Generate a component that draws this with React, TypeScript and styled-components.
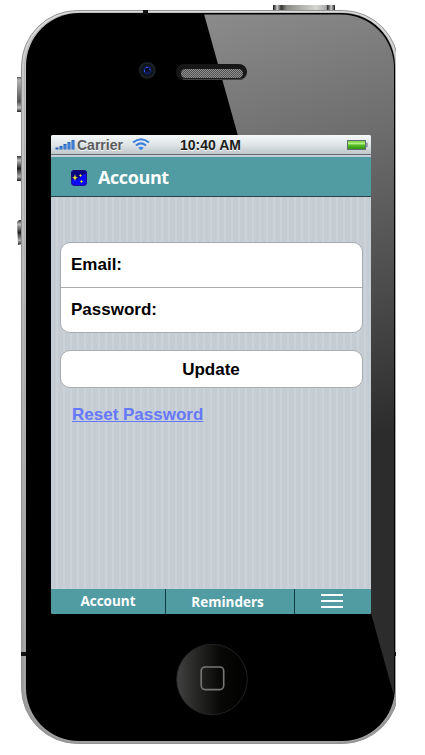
import React from "react";
import styled, { createGlobalStyle } from "styled-components";

const teal = "#519ba2";

const GlobalStyle = createGlobalStyle`
  body { margin: 0; background: #fff; overflow: hidden; }
  * { box-sizing: border-box; }
`;

const Stage = styled.main`
  position: relative;
  width: 425px;
  height: 755px;
  padding: 135px 54px 0 51px;
  overflow: hidden;
  font-family: "Liberation Sans", Arial, sans-serif;
`;

const Device = styled.svg`
  position: absolute;
  inset: 0;
  display: block;
`;

const Screen = styled.section`
  position: relative;
  width: 320px;
  height: 479px;
  display: flex;
  flex-direction: column;
  overflow: hidden;
  border-radius: 2px;
  background: repeating-linear-gradient(90deg, #c5ccd4 0 5px, #cbd2d8 5px 7px);
`;

const StatusBar = styled.div`
  height: 20px;
  flex: none;
  display: grid;
  grid-template-columns: 1fr auto 1fr;
  align-items: center;
  padding: 0 3px 0 4px;
  background: linear-gradient(#f5f8f9, #dce2e4 55%, #bfc7cb);
  border-bottom: 1px solid #66716f;
  font-size: 14px;
  font-weight: 700;
  color: #1c1c1c;
  text-shadow: 0 1px 0 #fff;
`;

const Signal = styled.div`
  display: flex;
  align-items: center;
  color: #5b5b5b;
`;

const Carrier = styled.span`
  margin: 0 9px 0 2px;
`;

const Clock = styled.span`
  margin-right: 2px;
`;

const Battery = styled.svg`
  justify-self: end;
`;

const Header = styled.header`
  height: 42px;
  flex: none;
  display: flex;
  align-items: center;
  gap: 11px;
  padding: 2px 0 0 20px;
  border-top: 2px solid #c5ccd8;
  border-bottom: 1px solid #263e47;
  background: ${teal};
`;

const Title = styled.h1`
  margin: 0 0 2px;
  color: #fff;
  font: 700 18px/24px "Open Sans", sans-serif;
  letter-spacing: -0.4px;
`;

const Content = styled.div`
  flex: 1;
  padding: 45px 8px 0 9px;
`;

const Card = styled.div`
  border: 1px solid #a9acaf;
  border-radius: 10px;
  background: #fff;
  overflow: hidden;
`;

const Field = styled.label`
  display: block;
  height: 44px;
  padding-left: 10px;
  font: 700 17px/43px "Liberation Sans", Arial, sans-serif;
  color: #000;
  & + & { height: 45px; border-top: 1px solid #a9acaf; }
`;

const UpdateButton = styled.button`
  display: block;
  width: 100%;
  height: 38px;
  margin: 17px 0 16px;
  padding: 2px 1px 0 0;
  border: 1px solid #a9acaf;
  border-radius: 10px;
  background: #fff;
  color: #000;
  font: 700 17px "Liberation Sans", Arial, sans-serif;
`;

const ResetLink = styled.a`
  margin-left: 12px;
  color: #6678fb;
  font-size: 17px;
  font-weight: 700;
  line-height: 22px;
  text-decoration: underline;
`;

const TabBar = styled.nav`
  height: 25px;
  flex: none;
  display: grid;
  grid-template-columns: 115px 129px 76px;
  background: ${teal};
`;

const Tab = styled.a<{ $divided?: boolean; $lift?: number; $shift?: number }>`
  display: flex;
  align-items: center;
  justify-content: center;
  padding: 0 ${({ $shift = 2 }) => $shift}px ${({ $lift = 0 }) => $lift}px 0;
  border-right: ${({ $divided }) => ($divided ? "1px solid #113e43" : "0")};
  color: #fff;
  font: 700 13.5px/20px "Open Sans", sans-serif;
`;

const PhoneBody = () => (
  <Device width="425" height="755" viewBox="0 0 425 755" aria-hidden="true">
    <defs>
      <linearGradient id="rim" x1="0" y1="0" x2="0" y2="1">
        <stop offset="0" stopColor="#ddd" />
        <stop offset=".1" stopColor="#c6c6c6" />
        <stop offset="1" stopColor="#999" />
      </linearGradient>
      <linearGradient id="glare" gradientUnits="userSpaceOnUse" x1="240" y1="0" x2="360" y2="440">
        <stop offset="0" stopColor="#8c8c8c" />
        <stop offset=".32" stopColor="#707070" />
        <stop offset=".83" stopColor="#3e3e3e" />
        <stop offset="1" stopColor="#2c2c2c" />
      </linearGradient>
      <linearGradient id="side" x1="0" y1="0" x2="0" y2="1">
        <stop offset="0" stopColor="#555" />
        <stop offset=".08" stopColor="#b4b4b4" />
        <stop offset=".7" stopColor="#555" />
        <stop offset=".88" stopColor="#bbb" />
        <stop offset="1" stopColor="#222" />
      </linearGradient>
      <linearGradient id="rocker" x1="0" y1="0" x2="0" y2="1">
        <stop offset="0" stopColor="#333" />
        <stop offset=".17" stopColor="#bbb" />
        <stop offset=".5" stopColor="#222" />
        <stop offset=".82" stopColor="#aaa" />
        <stop offset="1" stopColor="#222" />
      </linearGradient>
      <linearGradient id="power">
        <stop offset="0" stopColor="#111" />
        <stop offset=".07" stopColor="#ccc" />
        <stop offset=".13" stopColor="#333" />
        <stop offset=".22" stopColor="#8a8a85" />
        <stop offset=".7" stopColor="#d6d6d3" />
        <stop offset=".86" stopColor="#aaa" />
        <stop offset=".88" stopColor="#333" />
        <stop offset=".94" stopColor="#ccc" />
        <stop offset="1" stopColor="#111" />
      </linearGradient>
      <linearGradient id="home">
        <stop offset="0" stopColor="#414141" />
        <stop offset=".62" stopColor="#080806" />
        <stop offset="1" stopColor="#000" />
      </linearGradient>
      <pattern id="mesh" width="2" height="2" patternUnits="userSpaceOnUse">
        <rect width="2" height="2" fill="#505050" />
        <path d="M0 0h1v1H0zM1 1h1v1H1z" fill="#909090" />
      </pattern>
      <clipPath id="edge"><path d="M0 0h396v755H0z" /></clipPath>
      <clipPath id="glass"><rect x="26" y="14.5" width="368" height="726.5" rx="53" /></clipPath>
    </defs>
    <path d="M273 5h62v6h-62z" fill="url(#power)" />
    <path d="M17 77h5v35h-5z" fill="url(#side)" />
    <path d="M17 156h5v25h-5z" fill="url(#rocker)" />
    <path d="M17 222l2-2h3v24l-4 1z" fill="url(#rocker)" />
    <g clipPath="url(#edge)">
      <rect x="21.5" y="10.5" width="377" height="733" rx="56" fill="url(#rim)" stroke="#929292" />
      <rect x="24.5" y="12.7" width="371" height="729" rx="54" fill="none" stroke="#aaa" strokeWidth=".8" />
      <rect x="26" y="13" width="369" height="728" rx="53" fill="#000" />
    </g>
    <path d="M204 14H425V807L204 14z" fill="url(#glare)" clipPath="url(#glass)" />
    <path d="M143 10h5v4h-5zM21 652h5v4h-5zM394 652h2v4h-2z" fill="#111" />
    <circle cx="147.3" cy="70.3" r="8.4" fill="#1d2226" />
    <circle cx="147.3" cy="70.3" r="6.5" fill="#101519" />
    <circle cx="147.5" cy="70.3" r="4" fill="#12216a" />
    <circle cx="147.5" cy="70.3" r="2.2" fill="#03031e" />
    <path d="M144 70h1v2h-1zM146 67h2v1h-2zM149 69h1v1h-1z" fill="#3a55e8" />
    <rect x="176" y="64" width="71" height="16" rx="8" fill="#171717" />
    <path d="M183 79.4h57q5 0 6-4" fill="none" stroke="#4a4a4a" />
    <rect x="181" y="69" width="62" height="9" rx="4.5" fill="url(#mesh)" />
    <circle cx="212" cy="679.5" r="35.3" fill="url(#home)" stroke="#292929" strokeWidth=".8" />
    <rect x="201.2" y="667" width="22.5" height="22.6" rx="4" fill="none" stroke="#777" strokeWidth="1.6" />
  </Device>
);

const SignalBars = () => (
  <svg width="20" height="12" viewBox="0 0 20 12" aria-hidden="true">
    <path d="M.5 8.5h3v2h-3zM4.500 7h3v3.500h-3zM8.500 5h3v5.500h-3zM12.500 3h3v7.500h-3zM16.500 1h3v9.500h-3z" fill="#2461bd" />
    <path d="M5.500 8h1v2h-1zM9.500 6h1v4h-1zM13.500 4h1v6h-1zM17.500 2h1v8h-1z" fill="#5b9df0" />
  </svg>
);

const WifiMark = () => (
  <svg width="18" height="13" viewBox="0 0 18 13" fill="none" aria-hidden="true">
    <path d="M1 4.500Q9-2 17 4.500M4 7.600Q9 3.200 14 7.600" stroke="#3b7fdc" strokeWidth="2" />
    <path d="M6.300 9.800Q9 7.700 11.700 9.800L9 12.300z" fill="#3b82e5" />
  </svg>
);

const BatteryMark = () => (
  <Battery width="22" height="11" viewBox="0 0 22 11" aria-hidden="true">
    <defs>
      <linearGradient id="charge" x1="0" y1="0" x2="0" y2="1">
        <stop offset="0" stopColor="#65c932" />
        <stop offset=".35" stopColor="#b5f281" />
        <stop offset=".52" stopColor="#55bd25" />
        <stop offset="1" stopColor="#298d0c" />
      </linearGradient>
    </defs>
    <rect x="1.5" y="1.5" width="18" height="9" fill="url(#charge)" stroke="#626d72" />
    <path d="M20 4.200h1.200v3.600H20z" fill="#c0c9cf" stroke="#6d797f" strokeWidth=".8" />
  </Battery>
);

const StarBadge = () => (
  <svg width="16" height="16" viewBox="0 0 16 16" aria-hidden="true">
    <rect width="16" height="16" rx="4" fill="#0808fb" />
    <path d="M4 0h8q4 0 4 3l-6 3-4 4-6-1V4q0-4 4-4z" fill="#060080" />
    <rect x=".5" y=".5" width="15" height="15" rx="3.5" fill="none" stroke="#321064" strokeWidth=".7" />
    <path d="M4 4l.8 3L7 7.800 4.800 8.600 4 11l-.8-2.400L1 7.800 3.200 7z" fill="#ffed32" />
    <path d="M9.500 4v3M8 5.500h3M10.500 10v3M9 11.500h3" stroke="#a79b42" />
    <path d="M9 5h1v1H9zM10 11h1v1h-1z" fill="#ffe83d" />
  </svg>
);

const MenuMark = () => (
  <svg width="22" height="14" viewBox="0 0 22 14" aria-label="Menu">
    <path d="M0 0h22v2H0zM0 6h22v2H0zM0 12h22v2H0z" fill="#fff" />
  </svg>
);

export default function App() {
  return (
    <Stage>
      <GlobalStyle />
      <PhoneBody />
      <Screen>
        <StatusBar>
          <Signal><SignalBars /><Carrier>Carrier</Carrier><WifiMark /></Signal>
          <Clock>10:40 AM</Clock>
          <BatteryMark />
        </StatusBar>
        <Header><StarBadge /><Title>Account</Title></Header>
        <Content>
          <Card>
            <Field>Email:</Field>
            <Field>Password:</Field>
          </Card>
          <UpdateButton>Update</UpdateButton>
          <ResetLink>Reset Password</ResetLink>
        </Content>
        <TabBar>
          <Tab $divided $lift={2} $shift={0}>Account</Tab>
          <Tab $divided $shift={5}>Reminders</Tab>
          <Tab $lift={1}><MenuMark /></Tab>
        </TabBar>
      </Screen>
    </Stage>
  );
}
